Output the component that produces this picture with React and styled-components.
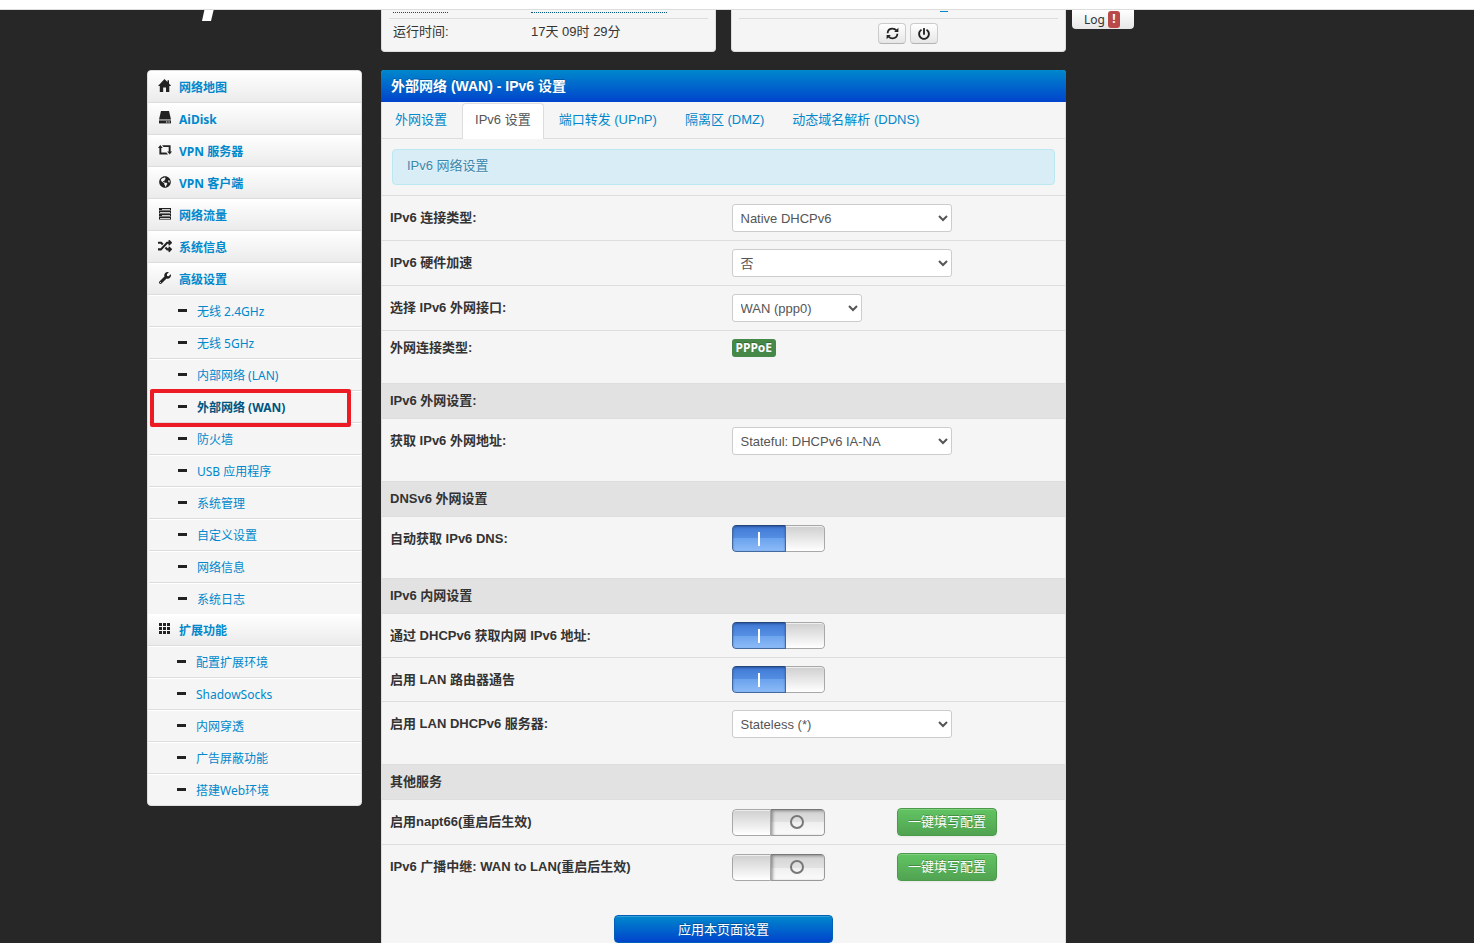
import React, { useState } from "react";
import styled, { createGlobalStyle, css } from "styled-components";
import { FaWrench, FaRandom, FaGlobeAmericas, FaPowerOff } from "react-icons/fa";

const menu = [
    { name: "网络地图", icon: <HomeIcon /> },
    { name: "AiDisk", icon: <DiskIcon /> },
    { name: "VPN 服务器", icon: <RetweetIcon /> },
    { name: "VPN 客户端", icon: <FaGlobeAmericas size={12} /> },
    { name: "网络流量", icon: <TasksIcon /> },
    { name: "系统信息", icon: <FaRandom size={14} /> },
    { name: "高级设置", icon: <FaWrench size={12} /> },
];

const advanced = [
    "无线 2.4GHz",
    "无线 5GHz",
    "内部网络 (LAN)",
    "外部网络 (WAN)",
    "防火墙",
    "USB 应用程序",
    "系统管理",
    "自定义设置",
    "网络信息",
    "系统日志",
];

const extensions = ["配置扩展环境", "ShadowSocks", "内网穿透", "广告屏蔽功能", "搭建Web环境"];

const tabs = ["外网设置", "IPv6 设置", "端口转发 (UPnP)", "隔离区 (DMZ)", "动态域名解析 (DDNS)"];

export default function App() {
    return (
        <>
            <GlobalStyle />
            <TopStrip />
            <Page>
                <Status />
                <Columns>
                    <Sidebar />
                    <Settings />
                </Columns>
            </Page>
        </>
    );
}

function Status() {
    return (
        <StatusRow>
            <Brand>
                <svg width="12" height="11" viewBox="0 0 12 11">
                    <path d="M2.4 0H11.6L9 11H0Z" fill="#fff" />
                </svg>
            </Brand>
            <Cards>
                <Card>
                    <CutRow>
                        <DottedLine $width={55} />
                        <DottedLine $width={136} />
                    </CutRow>
                    <InfoRow>
                        <span>运行时间:</span>
                        <span>17天 09时 29分</span>
                    </InfoRow>
                </Card>
                <Card>
                    <CutRow>
                        <span />
                        <LinkEdge />
                    </CutRow>
                    <ButtonRow>
                        <SmallButton type="button" aria-label="refresh"><RefreshIcon /></SmallButton>
                        <SmallButton type="button" aria-label="power"><FaPowerOff size={12} /></SmallButton>
                    </ButtonRow>
                </Card>
            </Cards>
            <LogButton type="button">Log <LogBadge>!</LogBadge></LogButton>
        </StatusRow>
    );
}

function Sidebar() {
    return (
        <Nav>
            {menu.map((item) => (
                <MenuItem key={item.name} href="#">
                    <IconBox>{item.icon}</IconBox>
                    {item.name}
                </MenuItem>
            ))}
            <SubMenu>
                {advanced.map((name) => (
                    <SubItem key={name} href="#" $active={name === "外部网络 (WAN)"}>
                        <Minus />
                        {name}
                    </SubItem>
                ))}
            </SubMenu>
            <MenuItem href="#">
                <IconBox><GridIcon /></IconBox>
                扩展功能
            </MenuItem>
            <div>
                {extensions.map((name) => (
                    <SubItem key={name} href="#">
                        <Minus />
                        {name}
                    </SubItem>
                ))}
            </div>
        </Nav>
    );
}

function Settings() {
    return (
        <Panel>
            <Title>外部网络 (WAN) - IPv6 设置</Title>
            <Tabs>
                {tabs.map((tab) => (
                    <Tab key={tab} href="#" $active={tab === "IPv6 设置"}>{tab}</Tab>
                ))}
            </Tabs>
            <Alert>IPv6 网络设置</Alert>
            <Table>
                <colgroup>
                    <LabelCol />
                    <col />
                    <ActionCol />
                </colgroup>
                <tbody>
                    <SelectRow id="type" label="IPv6 连接类型:" value="Native DHCPv6" />
                    <SelectRow id="hw" label="IPv6 硬件加速" value="否" />
                    <SelectRow id="iface" label="选择 IPv6 外网接口:" value="WAN (ppp0)" small />
                    <tr>
                        <LabelCell $last>外网连接类型:</LabelCell>
                        <Cell colSpan={2} $last><Badge>PPPoE</Badge></Cell>
                    </tr>
                    <Section>IPv6 外网设置:</Section>
                    <SelectRow id="addr" label="获取 IPv6 外网地址:" value="Stateful: DHCPv6 IA-NA" last />
                    <Section>DNSv6 外网设置</Section>
                    <SwitchRow id="dns" label="自动获取 IPv6 DNS:" on last />
                    <Section>IPv6 内网设置</Section>
                    <SwitchRow id="lan" label="通过 DHCPv6 获取内网 IPv6 地址:" on />
                    <SwitchRow id="radv" label="启用 LAN 路由器通告" on />
                    <SelectRow id="dhcp" label="启用 LAN DHCPv6 服务器:" value="Stateless (*)" last />
                    <Section>其他服务</Section>
                    <SwitchRow id="napt" label="启用napt66(重启后生效)" action="一键填写配置" />
                    <SwitchRow id="relay" label="IPv6 广播中继: WAN to LAN(重启后生效)" action="一键填写配置" last />
                </tbody>
            </Table>
            <Footer>
                <ApplyButton type="button">应用本页面设置</ApplyButton>
            </Footer>
        </Panel>
    );
}

function Section({ children }) {
    return (
        <tr>
            <SectionCell colSpan={3}>{children}</SectionCell>
        </tr>
    );
}

function SelectRow({ id, label, value, small, last }) {
    return (
        <tr>
            <LabelCell $last={last}><label htmlFor={id}>{label}</label></LabelCell>
            <Cell colSpan={2} $last={last}>
                <Select id={id} $small={small} defaultValue={value}>
                    <option>{value}</option>
                </Select>
            </Cell>
        </tr>
    );
}

function SwitchRow({ id, label, on = false, action, last }) {
    const [checked, setChecked] = useState(on);

    return (
        <tr>
            <LabelCell $last={last}><label htmlFor={id}>{label}</label></LabelCell>
            <Cell $last={last} colSpan={action ? 1 : 2}>
                <Switch>
                    <input id={id} type="checkbox" checked={checked} onChange={(e) => setChecked(e.target.checked)} />
                    {checked && <Track $on><OnMark /></Track>}
                    <Knob $on={checked} />
                    {!checked && <Track><OffMark /></Track>}
                </Switch>
            </Cell>
            {action && <Cell $last={last}><GreenButton type="button">{action}</GreenButton></Cell>}
        </tr>
    );
}

function HomeIcon() {
    return (
        <svg width="14" height="13" viewBox="0 0 14 13" fill="currentColor">
            <path d="M6.5 0L9.5 3V1.2H11V4.6L13.2 7H11.3V13H8V8.6H5.2V13H1.8V7H0Z" />
        </svg>
    );
}

function DiskIcon() {
    return (
        <svg width="14" height="13" viewBox="0 0 14 13" fill="currentColor">
            <path d="M3 0H11L13 8.6H1Z" />
            <path d="M1 9.4H13V12.4H1Z" />
            <path d="M8 10.4H9.4V11.4H8ZM10.4 10.4H11.8V11.4H10.4Z" fill="#fff" />
        </svg>
    );
}

function RetweetIcon() {
    return (
        <svg width="14" height="10" viewBox="0 0 14 10" fill="currentColor">
            <path d="M2.3 0L4.8 3H3.3V7.6H8.4L10 9.4H1.4V3H0Z" />
            <path d="M11.7 9.6L9.2 6.6H10.7V2H5.6L4 .2H12.6V6.6H14Z" />
        </svg>
    );
}

function TasksIcon() {
    return (
        <svg width="14" height="12" viewBox="0 0 14 12">
            {[0, 3, 6, 9].map((y) => (
                <g key={y}>
                    <rect x="1" y={y} width="12" height="2.6" fill="#222" />
                    <rect x={y % 2 ? 2 : 4} y={y + 1} width={y % 2 ? 10 : 8} height="1" fill="#ccc" />
                </g>
            ))}
        </svg>
    );
}

function GridIcon() {
    const cells = [0, 4, 8];
    return (
        <svg width="14" height="11" viewBox="0 0 14 11" fill="currentColor">
            {cells.map((y) => cells.map((x) => <rect key={x + "-" + y} x={x + 1} y={y} width="3" height="3" />))}
        </svg>
    );
}

function RefreshIcon() {
    return (
        <svg width="13" height="13" viewBox="0 0 13 13" fill="none" stroke="#222" strokeWidth="1.8">
            <path d="M1.6 6.2C1.8 3.2 4 1.6 6.5 1.6C8.2 1.6 9.4 2.3 10.4 3.4" />
            <path d="M11.4 6.8C11.2 9.8 9 11.4 6.5 11.4C4.8 11.4 3.6 10.7 2.6 9.6" />
            <path d="M12.4 .8V5H8.2Z" fill="#222" stroke="none" />
            <path d="M.6 12.2V8H4.8Z" fill="#222" stroke="none" />
        </svg>
    );
}

const GlobalStyle = createGlobalStyle`
    * {
        box-sizing: border-box;
    }

    body {
        margin: 0;
        background: #272727;
        color: #333;
        font-family: "Liberation Sans", "Noto Sans CJK SC", sans-serif;
        font-size: 13px;
        line-height: 18px;
    }

    a {
        color: #08c;
        text-decoration: none;
    }

    button, select {
        font-family: inherit;
        font-size: 13px;
    }

    svg {
        display: block;
    }
`;

const TopStrip = styled.div`
    height: 10px;
    background: #fff;
    border-bottom: 1px solid #ddd;
`;

const Page = styled.div`
    width: 100%;
    max-width: 1180px;
    margin: 0 auto;
`;

const StatusRow = styled.div`
    display: flex;
    align-items: flex-start;
    margin-bottom: 18px;
`;

const Brand = styled.div`
    width: 234px;
    padding-left: 55px;
`;

const Cards = styled.div`
    display: grid;
    grid-template-columns: 1fr 1fr;
    gap: 15px;
    width: 685px;
    margin-right: 6px;
`;

const Card = styled.div`
    height: 42px;
    padding: 0 7px;
    background: #f5f5f5;
    border: 1px solid #ddd;
    border-top: 0;
    border-radius: 0 0 4px 4px;
`;

const CutRow = styled.div`
    display: grid;
    grid-template-columns: 138px 1fr;
    height: 9px;
    padding: 0 4px;
    border-bottom: 1px solid #ddd;
`;

const DottedLine = styled.span`
    width: ${(props) => props.$width}px;
    height: 3px;
    border-bottom: 1px dotted #005580;
`;

const LinkEdge = styled.span`
    width: 8px;
    height: 2px;
    margin-left: 59px;
    border-bottom: 1px solid #08c;
`;

const InfoRow = styled.div`
    display: grid;
    grid-template-columns: 138px 1fr;
    padding: 4px;
`;

const ButtonRow = styled.div`
    display: flex;
    gap: 4px;
    padding: 4px 0 0 139px;
`;

const SmallButton = styled.button`
    display: flex;
    align-items: center;
    justify-content: center;
    width: 28px;
    height: 21px;
    padding: 0;
    color: #222;
    background: linear-gradient(#fff, #e6e6e6);
    border: 1px solid #ccc;
    border-bottom-color: #b3b3b3;
    border-radius: 4px;
`;

const LogButton = styled.button`
    display: flex;
    align-items: center;
    justify-content: center;
    gap: 3px;
    width: 62px;
    height: 19px;
    padding: 0 2px 0 0;
    color: #333;
    background: linear-gradient(#fff, #e6e6e6);
    border: 0;
    border-radius: 0 0 4px 4px;
    && {
        font-family: "Noto Sans", sans-serif;
        font-size: 12px;
    }
`;

const LogBadge = styled.span`
    width: 12px;
    height: 17px;
    line-height: 16px;
    color: #fff;
    font-weight: 700;
    background: #b94a48;
    border-radius: 3px;
`;

const Columns = styled.div`
    display: flex;
    align-items: flex-start;
    gap: 19px;
`;

const Nav = styled.nav`
    width: 215px;
    font-family: "Noto Sans", "Noto Sans CJK SC", sans-serif;
    font-size: 12px;
    background: #f5f5f5;
    border: 1px solid #ddd;
    border-radius: 4px;

    > a:first-child {
        border-radius: 3px 3px 0 0;
    }

    > div > a:last-child {
        height: 31px;
        border-bottom: 0;
    }
`;

const MenuItem = styled.a`
    display: flex;
    align-items: center;
    gap: 7px;
    height: 32px;
    padding-top: 2px;
    padding-left: 10px;
    font-weight: 700;
    background: linear-gradient(#fff, #ebebeb);
    border-bottom: 1px solid #ddd;
`;

const IconBox = styled.span`
    display: flex;
    justify-content: center;
    width: 14px;
    padding-bottom: 4px;
    color: #222;
`;

const SubMenu = styled.div`
    padding-left: 1px;
`;

const SubItem = styled.a`
    display: flex;
    align-items: center;
    gap: 10px;
    position: relative;
    height: 32px;
    padding-top: 2px;
    padding-left: 29px;
    border-bottom: 1px solid #ddd;
    box-shadow: inset 0 1px #fff;

    ${(props) => props.$active && css`
        color: #005580;
        font-weight: 700;

        &::after {
            content: "";
            position: absolute;
            z-index: 1;
            top: -2px;
            right: 10px;
            bottom: -5px;
            left: 1px;
            border: 4px solid #ed1c24;
            border-radius: 2px;
        }
    `}
`;

const Minus = styled.span`
    width: 9px;
    height: 3px;
    margin-bottom: 2px;
    background: #222;
`;

const Panel = styled.main`
    width: 685px;
    background: #f5f5f5;
    border: 1px solid #ddd;
    border-width: 0 1px;
    border-radius: 4px 4px 0 0;
`;

const Title = styled.h1`
    margin: 0 -1px;
    padding: 0 10px;
    height: 32px;
    line-height: 32px;
    color: #fff;
    font-size: 14px;
    font-weight: 700;
    text-shadow: 0 -1px 0 rgba(0, 0, 0, 0.25);
    background: linear-gradient(#08c, #04c);
    border-radius: 3px 3px 0 0;
`;

const Tabs = styled.nav`
    display: flex;
    gap: 2px;
    padding-top: 1px;
    border-bottom: 1px solid #ddd;
`;

const Tab = styled.a`
    height: 36px;
    margin-bottom: -1px;
    padding: 7px 12px;
    border: 1px solid transparent;
    border-bottom: 0;
    border-radius: 4px 4px 0 0;

    ${(props) => props.$active && css`
        color: #555;
        background: #fff;
        border-color: #ddd;
    `}
`;

const Alert = styled.div`
    height: 36px;
    margin: 10px;
    padding: 7px 14px;
    color: #3a87ad;
    text-shadow: 0 1px 0 rgba(255, 255, 255, 0.5);
    background: #d9edf7;
    border: 1px solid #bce8f1;
    border-radius: 4px;
`;

const Table = styled.table`
    width: 100%;
    table-layout: fixed;
    border-collapse: separate;
    border-spacing: 0;
`;

const LabelCol = styled.col`
    width: 50%;
`;

const ActionCol = styled.col`
    width: 176px;
`;

const Cell = styled.td`
    padding: 8px;
    padding-bottom: ${(props) => (props.$last ? 26 : 8)}px;
    border-top: 1px solid #ddd;
    vertical-align: middle;
`;

const LabelCell = styled(Cell).attrs({ as: "th" })`
    text-align: left;
    font-weight: 700;
`;

const SectionCell = styled.th`
    height: 35px;
    padding: 0 8px;
    text-align: left;
    background: #e2e2e2;
    border-top: 1px solid #ddd;
`;

const Select = styled.select`
    display: block;
    width: ${(props) => (props.$small ? 130 : 220)}px;
    height: 28px;
    padding: 4px;
    color: #555;
    background-color: #fff;
    border: 1px solid #ccc;
    border-radius: 3px;
`;

const Badge = styled.span`
    display: block;
    width: fit-content;
    height: 18px;
    padding: 0 4px;
    line-height: 18px;
    color: #fff;
    font-family: "Noto Sans", sans-serif;
    font-size: 12px;
    font-weight: 700;
    text-shadow: 0 -1px 0 rgba(0, 0, 0, 0.25);
    background: #468847;
    border-radius: 3px;
`;

const Switch = styled.label`
    display: flex;
    position: relative;
    width: 93px;
    height: 27px;
    overflow: hidden;
    border-radius: 4px;
    cursor: pointer;

    input {
        position: absolute;
        inset: 0;
        margin: 0;
        opacity: 0;
    }
`;

const Track = styled.span`
    display: flex;
    flex: 1;
    align-items: center;
    justify-content: center;

    ${(props) => (props.$on ? css`
        background: linear-gradient(#3f78d3, #5590e4 50%, #6ba3ee 50%, #8cbaf7);
        border: 1px solid #43699f;
        border-top-color: #24467c;
        border-radius: 4px 0 0 4px;
        box-shadow: inset 0 1px 2px rgba(20, 50, 110, 0.5);
    ` : css`
        background: linear-gradient(#d2d2d2, #e2e2e2 50%, #efefef 50%, #fbfbfb);
        border: 1px solid #999;
        border-top-color: #777;
        border-left: 0;
        border-radius: 0 4px 4px 0;
        box-shadow: inset 2px 1px 3px rgba(0, 0, 0, 0.35);
    `)}
`;

const Knob = styled.span`
    width: 39px;
    background: linear-gradient(#cfcfcf, #fff);
    border: 1px solid #a8a8a8;
    border-radius: ${(props) => (props.$on ? "0 4px 4px 0" : "4px 0 0 4px")};
    border-left-width: ${(props) => (props.$on ? 0 : 1)}px;
    box-shadow: inset 0 1px 0 #eee;
`;

const OnMark = styled.span`
    width: 2px;
    height: 14px;
    background: #fff;
`;

const OffMark = styled.span`
    width: 14px;
    height: 14px;
    border: 2px solid #777;
    border-radius: 50%;
`;

const GreenButton = styled.button`
    display: block;
    height: 28px;
    padding: 0 10px 3px;
    color: #fff;
    text-shadow: 0 -1px 0 rgba(0, 0, 0, 0.25);
    background: linear-gradient(#62c462, #51a351);
    border: 1px solid #4a9a4a;
    border-radius: 4px;
    box-shadow: inset 0 1px 0 rgba(255, 255, 255, 0.2), 0 1px 2px rgba(0, 0, 0, 0.05);
`;

const Footer = styled.div`
    display: flex;
    justify-content: center;
    padding-top: 8px;
`;

const ApplyButton = styled.button`
    width: 32%;
    height: 28px;
    padding-bottom: 3px;
    color: #fff;
    text-shadow: 0 -1px 0 rgba(0, 0, 0, 0.25);
    background: linear-gradient(#08c, #04c);
    border: 1px solid #0060b8;
    border-radius: 4px;
    box-shadow: inset 0 1px 0 rgba(255, 255, 255, 0.2);
`;
